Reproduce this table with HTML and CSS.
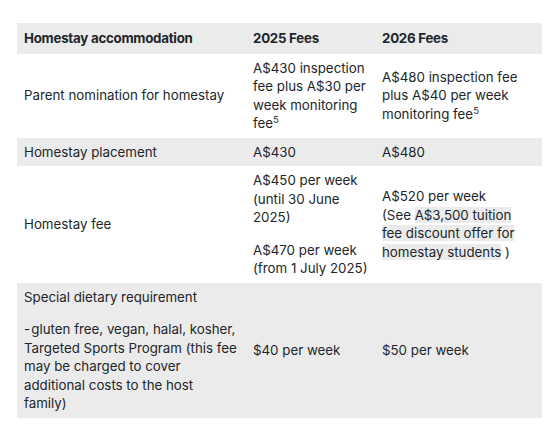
FILE: index.html
```html
<!DOCTYPE html>
<html>
<head>
<meta charset="utf-8">
<link rel="stylesheet" href="styles.css">
</head>
<body>
<table class="fees">
  <colgroup>
    <col class="c1"><col class="c2"><col class="c3">
  </colgroup>
  <thead>
    <tr class="grey head">
      <th>Homestay accommodation</th>
      <th>2025 Fees</th>
      <th>2026 Fees</th>
    </tr>
  </thead>
  <tbody>
    <tr>
      <td>Parent nomination for homestay</td>
      <td>A$430 inspection fee plus A$30 per week monitoring fee<sup>5</sup></td>
      <td>A$480 inspection fee plus A$40 per week monitoring fee<sup>5</sup></td>
    </tr>
    <tr class="grey">
      <td>Homestay placement</td>
      <td>A$430</td>
      <td>A$480</td>
    </tr>
    <tr>
      <td>Homestay fee</td>
      <td><p>A$450 per week (until 30 June 2025)</p><p>A$470 per week (from 1 July 2025)</p></td>
      <td>A$520 per week<br>(See <span class="hl">A$3,500 tuition fee discount offer for homestay students</span> )</td>
    </tr>
    <tr class="grey">
      <td><p>Special dietary requirement</p><p>-&#8202;gluten free, vegan, halal, kosher, Targeted Sports Program (this fee may be charged to cover additional costs to the host family)</p></td>
      <td>$40 per week</td>
      <td>$50 per week</td>
    </tr>
  </tbody>
</table>
</body>
</html>
```

FILE: styles.css
```css
html, body {
  margin: 0;
  padding: 0;
  background: #ffffff;
}
body {
  padding: 23px 12px 0 17px;
  font-family: Inter, "Liberation Sans", sans-serif;
  font-size: 13.3px;
  line-height: 18.5px;
  color: #22262b;
}
.fees {
  border-collapse: collapse;
  width: 525px;
  table-layout: fixed;
}
.c1 { width: 229px; }
.c2 { width: 129px; }
.c3 { width: 167px; }
.fees th, .fees td {
  text-align: left;
  vertical-align: middle;
  padding: 5px 7px;
}
.fees th {
  font-weight: 700;
  letter-spacing: -0.25px;
  padding-top: 6px;
  padding-bottom: 6px;
}
.grey { background: #ebebeb; }
.fees p { margin: 0; }
.fees p + p { margin-top: 14px; }
.fees sup {
  font-size: 9.5px;
  line-height: 0;
  vertical-align: 5px;
}
.hl { background: #ebebeb; }
```
